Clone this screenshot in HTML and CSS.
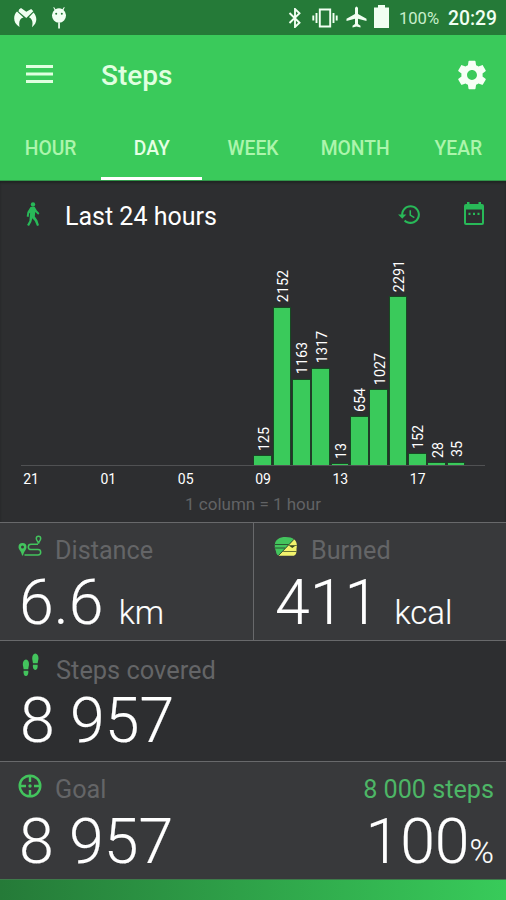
FILE: index.html
```
<!DOCTYPE html>
<html lang="en">
<head>
<meta charset="utf-8">
<title>Steps</title>
<link rel="stylesheet" href="styles.css">
</head>
<body>
<div class="status">
  <svg class="st-logo" width="24" height="22" viewBox="0 0 24 22"><path d="M6 1.5 L8 0 L13.300 3.800 L18.200 1 L20.300 3.300 L13.300 10 L5.500 3.500Z M4 3.500 L10.500 9.500 C6.500 10.500 5.700 14 6.500 19 C-.5 15 .2 7 4 3.500Z M20.500 4.500 C24.500 9 24.500 15 19 19.200 C20.200 14 19.300 11 16 9.200Z"/></svg>
  <svg class="st-bug" width="16" height="22" viewBox="0 0 16 22"><path d="M3 0 L4.500 2.200 A7 7 0 0 1 11.500 2.200 L13 0 L13.700 .6 L12.500 3 A7 7.200 0 1 1 3.500 3 L2.300 .6Z"/><path d="M7.200 15.500h1.700V21.500H7.200z"/><circle class="eye" cx="5.200" cy="6.700" r="1"/><circle class="eye" cx="10.800" cy="6.700" r="1"/></svg>
  <div class="grow"></div>
  <svg class="st-bt" width="14" height="20" viewBox="0 0 14 20"><path class="line" d="M1.500 5 L11.500 14.700 L7 19 V1 L11.500 5.300 L1.500 15"/></svg>
  <svg class="st-vib" width="26" height="20" viewBox="0 0 26 20"><path class="line" d="M7.800 1.500H18.200V18.500H7.800zM4.500 5V15M1.300 7.500V12.500M21.500 5V15M24.700 7.500V12.500"/></svg>
  <svg class="st-air" width="21" height="22" viewBox="0 0 21 22"><path d="M9 2 Q10.500 -1 12 2 V8 L20.500 12.800 V15 L12 12.800 V18 L14.500 19.800 V21.500 L10.500 20.400 L6.500 21.500 V19.800 L9 18 V12.800 L.5 15 V12.800 L9 8Z"/></svg>
  <svg class="st-bat" width="15" height="23" viewBox="0 0 15 23"><path d="M4 0h7v2.500h4V23H0V2.500h4z"/></svg>
  <span class="pct">100%</span>
  <span class="clock">20:29</span>
</div>
<header class="appbar">
  <div class="title-row">
    <svg class="menu" width="27" height="18" viewBox="0 0 27 18"><path d="M0 0h27v3H0zM0 7.500h27v3H0zM0 15h27v3H0z"/></svg>
    <h1>Steps</h1>
    <svg class="gear" width="34" height="34" viewBox="0 0 24 24"><path d="M19.430 12.980c.04-.32.07-.64.07-.98s-.03-.66-.07-.98l2.110-1.650c.19-.15.24-.42.12-.64l-2-3.460c-.12-.22-.39-.3-.61-.22l-2.490 1c-.52-.4-1.080-.73-1.690-.98l-.38-2.650C14.460 2.180 14.250 2 14 2h-4c-.25 0-.46.18-.49.42l-.38 2.650c-.61.25-1.170.59-1.690.98l-2.490-1c-.23-.09-.49 0-.61.22l-2 3.460c-.13.22-.07.49.12.64l2.110 1.650c-.04.32-.07.65-.07.98s.03.66.07.98l-2.110 1.650c-.19.15-.24.42-.12.64l2 3.460c.12.22.39.3.61.22l2.490-1c.52.4 1.080.73 1.690.98l.38 2.650c.03.24.24.42.49.42h4c.25 0 .46-.18.49-.42l.38-2.650c.61-.25 1.170-.59 1.690-.98l2.490 1c.23.09.49 0 .61-.22l2-3.460c.12-.22.07-.49-.12-.64l-2.110-1.650zM12 15.500c-1.930 0-3.500-1.570-3.500-3.500s1.570-3.500 3.500-3.500 3.500 1.570 3.500 3.500-1.570 3.500-3.500 3.500z"/></svg>
  </div>
  <nav class="tabs"><a>HOUR</a><a class="active">DAY</a><a>WEEK</a><a class="month">MONTH</a><a class="year">YEAR</a></nav>
</header>
<section class="history">
  <div class="history-head">
    <svg class="walk" width="27" height="25" viewBox="0 0 27 25"><circle cx="14" cy="2.500" r="2.200"/><path d="M11.500 5h4.300l2 3.600 2.600 2.700-1.200 1.500-3-2.700-.4 4.400 2.600 3.800 1.600 5-2 .8-2.200-5-2.500-2.900-1 3.800-2.300 4.100-1.900-1 2.300-4.400.7-8-.9.900-.6 3.300-1.900-.4.700-4.500z"/></svg>
    <h2>Last 24 hours</h2>
    <svg class="hist" width="25" height="25" viewBox="0 0 24 24"><path d="M13 3c-4.970 0-9 4.030-9 9H1l3.890 3.890.07.14L9 12H6c0-3.870 3.130-7 7-7s7 3.130 7 7-3.130 7-7 7c-1.930 0-3.680-.79-4.940-2.060l-1.420 1.420C8.270 19.990 10.510 21 13 21c4.970 0 9-4.030 9-9s-4.030-9-9-9zm-1 5v5l4.280 2.540.72-1.210-3.500-2.080V8H12z"/></svg>
    <svg class="cal" width="22" height="24" viewBox="0 0 22 24"><path fill-rule="evenodd" d="M4 0h2.500v2h9V0H18v2h1a2 2 0 0 1 2 2v17a2 2 0 0 1-2 2H3a2 2 0 0 1-2-2V4a2 2 0 0 1 2-2h1zM3 7.500V21H19V7.500zM5.500 10.700H7.500v2.200H5.500zM10 10.700h2v2.200h-2zM14.500 10.700h2v2.200h-2z"/></svg>
  </div>
  <div class="plot">
    <i></i><i></i><i></i><i></i><i></i><i></i><i></i><i></i><i></i><i></i><i></i><i></i>
    <div class="col"><span>125</span><b style="height:9px"></b></div>
    <div class="col"><span>2152</span><b style="height:157.500px"></b></div>
    <div class="col"><span>1163</span><b style="height:85.500px"></b></div>
    <div class="col"><span>1317</span><b style="height:96.500px"></b></div>
    <div class="col"><span>13</span><b style="height:1px"></b></div>
    <div class="col"><span>654</span><b style="height:48px"></b></div>
    <div class="col"><span>1027</span><b style="height:75px"></b></div>
    <div class="col"><span>2291</span><b style="height:168px"></b></div>
    <div class="col"><span>152</span><b style="height:11px"></b></div>
    <div class="col"><span>28</span><b style="height:2px"></b></div>
    <div class="col"><span>35</span><b style="height:2.500px"></b></div>
    <i></i>
  </div>
  <div class="axis"><span>21</span><span>01</span><span>05</span><span>09</span><span>13</span><span>17</span></div>
  <p class="caption">1 column = 1 hour</p>
</section>
<div class="pair">
  <section class="stat distance">
    <div class="label"><svg class="ic" width="24" height="24" viewBox="0 0 24 24"><path fill-rule="evenodd" d="M4.500 8a4 4 0 0 1 4 4c0 3-2.500 4-3.500 8.500H4C3.500 16 .5 15 .5 12a4 4 0 0 1 4-4zm0 2.500a1.500 1.500 0 1 0 0 3 1.500 1.500 0 0 0 0-3z"/><path class="thin" d="M6.500 20H20a2.700 2.700 0 0 0 0-5.400H13a2.700 2.700 0 0 1 0-5.400h7M20.500 8.500C20 6 18.300 5.500 18.300 3.500a2.200 2.200 0 0 1 4.400 0c0 2-1.700 2.500-2.200 5z"/></svg><span>Distance</span></div>
    <div class="big">6.6 <small>km</small></div>
  </section>
  <section class="stat burned">
    <div class="label"><svg class="ic" width="24" height="24" viewBox="0 0 24 24"><path d="M.8 9.500C1.300 4.500 5.500 2 11.500 2c4 0 6.500.8 8.500 2.300L4.500 20.500C3 20 2.200 18.500 2 16.500L.8 13z"/><path class="yellow" d="M20 4.300c2 1.700 2.900 3.700 2.900 6.200l-.4 3.500c.3 4-.8 6.800-3.500 6.800H4.500z"/><path class="dark" d="M1 9.500H14.500M1 13H11M4.500 20.500L20 4.300"/><path class="shade" d="M14.500 10.200H22.800v.8h-1.800l-2.700 2-2.800-2zM9.500 16H22.500v.7H8.800z"/></svg><span>Burned</span></div>
    <div class="big">411 <small>kcal</small></div>
  </section>
</div>
<section class="stat covered">
  <div class="label"><svg class="ic" width="24" height="24" viewBox="0 0 24 24"><path d="M8 6.500c2 0 3 2.300 3 4.700 0 2-.7 3.200-.7 5H5.600c0-1.800-.8-3-.8-5C4.800 8.800 6 6.500 8 6.500zM5.600 17.700h4.700c.4 3-.6 5.300-2.400 5.300s-2.700-2.300-2.300-5.300zM17.300.5c2 0 3.200 2.300 3.200 4.700 0 2-.8 3.200-.8 5h-4.800c0-1.800-.7-3-.7-5C14.200 2.800 15.300.5 17.300.5zM14.900 11.800h4.700c.4 3-.5 5.200-2.300 5.200s-2.800-2.200-2.400-5.200z"/></svg><span>Steps covered</span></div>
  <div class="big">8 957</div>
</section>
<section class="stat goal">
  <div class="label"><svg class="ic" width="24" height="24" viewBox="0 0 24 24"><circle class="ring" cx="12" cy="12" r="10.300"/><path class="ring" d="M12 1.500V8M12 16v6.500M1.500 12H8M16 12h6.500"/><circle cx="12" cy="12" r="1.700"/></svg><span>Goal</span><span class="target">8 000 steps</span></div>
  <div class="big"><span>8 957</span><span class="percent">100<small>%</small></span></div>
</section>
<div class="progress"></div>
</body>
</html>
```
FILE: styles.css
```
* { box-sizing: border-box; }
body {
  margin: 0;
  width: 506px;
  height: 900px;
  overflow: hidden;
  display: flex;
  flex-direction: column;
  background: #2d2e30;
  color: #fff;
  font-family: Roboto, "Liberation Sans", sans-serif;
}
svg { display: block; flex: none; fill: currentColor; }
h1, h2, p { margin: 0; font-weight: 400; }

.status {
  height: 35px;
  flex: none;
  display: flex;
  align-items: flex-start;
  padding: 0 9px 0 13px;
  background: #257a38;
  color: #f1fff2;
}
.grow { flex: 1; }
.st-logo { margin-top: 8px; }
.st-bug { margin: 7px 0 0 14px; }
.st-bug .eye { fill: #257a38; }
.line { fill: none; stroke: currentColor; stroke-width: 1.900; }
.st-bt { margin: 8px 10px 0 0; }
.st-vib { margin: 8px 8px 0 0; }
.st-air { margin: 6px 7px 0 0; }
.st-bat { margin: 5px 10px 0 0; }
.pct { font-size: 16.600px; line-height: 37px; margin-right: 9px; color: #c8efcb; }
.clock { font-size: 19.300px; font-weight: 500; line-height: 37px; }

.appbar { height: 146px; flex: none; background: #3aca5b; border-bottom: 1px solid #31964a; color: #e0ffe0; }
.title-row { height: 80px; display: flex; align-items: center; padding: 0 17px 0 26px; }
.menu { margin-top: -2px; }
h1 { flex: 1; margin-left: 48px; font-size: 28px; font-weight: 500; line-height: 32px; padding-top: 2px; }
.gear { color: #f6fff6; }
.tabs {
  height: 66px;
  display: grid;
  grid-template-columns: repeat(5, minmax(0, 1fr));
  font-size: 19.300px;
  font-weight: 500;
  line-height: 68px;
  color: #acf5ac;
}
.tabs a { height: 65px; text-align: center; }
.tabs .active { color: #e4ffe4; border-bottom: 3px solid #fff; }
.tabs .month { padding-left: 2px; }
.tabs .year { padding-left: 6px; }

.history { height: 341px; flex: none; color: #fff; box-shadow: inset 0 2px 2px #202523; }
.history-head { height: 70px; display: flex; align-items: center; padding: 0 21px 0 19px; color: #28b958; }
.history-head svg { margin-top: -4px; }
h2 { flex: 1; margin-left: 19px; padding-top: 2px; font-size: 25px; line-height: 30px; color: #fff; }
.hist { margin-right: 41px; }
.plot {
  height: 215px;
  margin: 0 21px;
  display: grid;
  grid-template-columns: repeat(24, minmax(0, 1fr));
  border-bottom: 1px solid #505153;
}
.col { display: flex; flex-direction: column; justify-content: flex-end; align-items: center; }
.col b { width: 16.500px; flex: none; background: #3aca5b; box-shadow: 0 0 1px 1px #174a23; clip-path: inset(-1px -1px 0 -1px); }
.col span {
  writing-mode: vertical-rl;
  transform: rotate(180deg);
  font-size: 14.300px;
  line-height: 18px;
  margin: 0 0 5px 2px;
}
.axis { display: grid; grid-template-columns: repeat(6, 1fr); margin: 5px 21px 0; font-size: 14px; line-height: 17px; }
.axis span { width: 20px; text-align: center; }
.caption { text-align: center; font-size: 17px; line-height: 20px; margin-top: 6px; color: #626365; }

.pair { height: 118px; flex: none; display: flex; }
.stat { border-top: 1px solid #68696b; padding: 12px 12px 0 18px; }
.pair .stat { flex: 1; background: #38393b; }
.pair .distance { flex: 0 0 253px; }
.pair .burned { border-left: 1px solid #68696b; padding-left: 20px; }
.label { height: 30px; display: flex; align-items: center; font-size: 25.200px; line-height: 30px; color: #646567; }
.label span { margin: 2px 0 0 13px; }
.ic { color: #43c45d; margin-top: -6px; }
.thin, .ring { fill: none; stroke: currentColor; stroke-width: 1.500; }
.ring { stroke-width: 2.400; }
.yellow { fill: #f2f36d; }
.dark { fill: none; stroke: #274b2c; stroke-width: .9; }
.shade { fill: #3a4a22; }
.big { margin-left: 1px; font-size: 62.600px; line-height: 76px; font-weight: 300; white-space: pre; -webkit-text-stroke: .15px #fff; }
small { font-size: 33px; }
.covered { height: 121px; flex: none; }
.covered .label { font-size: 25.400px; }
.covered .label span { margin: 4px 0 0 14px; }
.covered .big { margin-left: 2px; }
.goal { height: 118px; flex: none; background: #38393b; }
.label .target { margin-left: auto; color: #4db666; }
.goal .big { display: flex; justify-content: space-between; }
.progress { height: 21px; flex: none; border-top: 1px solid #3e7b4b; background: linear-gradient(90deg, #257a38, #38cb5a); }
```
